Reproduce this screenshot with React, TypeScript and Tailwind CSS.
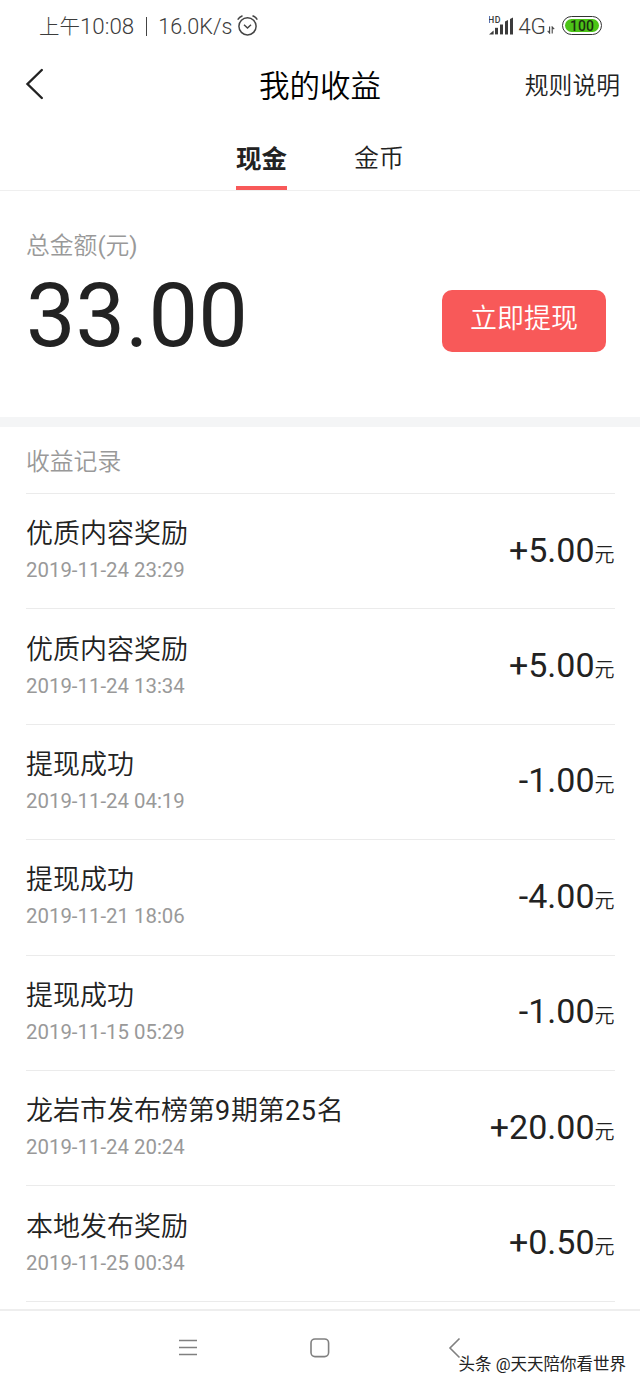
import React, { useState } from "react";

type EarningRecord = {
  title: string;
  time: string;
  amount: string;
};

const records: EarningRecord[] = [
  { title: "优质内容奖励", time: "2019-11-24 23:29", amount: "+5.00" },
  { title: "优质内容奖励", time: "2019-11-24 13:34", amount: "+5.00" },
  { title: "提现成功", time: "2019-11-24 04:19", amount: "-1.00" },
  { title: "提现成功", time: "2019-11-21 18:06", amount: "-4.00" },
  { title: "提现成功", time: "2019-11-15 05:29", amount: "-1.00" },
  { title: "龙岩市发布榜第9期第25名", time: "2019-11-24 20:24", amount: "+20.00" },
  { title: "本地发布奖励", time: "2019-11-25 00:34", amount: "+0.50" },
];

const AlarmIcon = () => (
  <svg className="ml-[5px] h-[22px] w-[22px]" viewBox="0 0 22 22" fill="none" stroke="#444" strokeWidth="1.5">
    <circle cx="10.5" cy="11.3" r="8.6" />
    <path d="M7 9.8L10.5 13L14 9.8" />
    <path d="M0.7 4.7Q2.3 1.9 5.5 0.8M20.3 4.7Q18.7 1.9 15.5 0.8" />
  </svg>
);

const SignalIcon = () => (
  <svg className="h-[20px] w-[26px]" viewBox="0 0 26 20" fill="#3c3c3c">
    <text x="-1" y="7.2" fontSize="8.8" fontWeight="500" letterSpacing="0.6" fontFamily="Roboto, sans-serif">
      HD
    </text>
    <path d="M0 18.4L4.6 14.5V18.4Z" />
    <rect x="6" y="11.8" width="3" height="6.6" />
    <rect x="11" y="8.5" width="3" height="9.9" />
    <path d="M16 5.4L19 4V18.4H16Z" />
    <path d="M21 3L24 1.5V18.4H21Z" />
  </svg>
);

const StatusBar = () => (
  <div className="flex h-[52px] items-center justify-between pl-[39px] pr-[38px] text-[#3c3c3c]">
    <div className="flex items-center whitespace-pre text-[22px] font-light">
      <span className="mt-[2px] text-[20.5px]">上午</span>
      <span className="mt-[2px] text-[22.3px]">10:08</span>
      <span className="ml-[12px] mr-[11px] h-[19px] w-px bg-[#444]" />
      <span className="mt-[2px] text-[21.6px]">16.0K/s</span>
      <AlarmIcon />
    </div>
    <div className="flex items-center">
      <SignalIcon />
      <span className="ml-[3px] mt-[2px] text-[22.5px] font-light">4G</span>
      <svg className="ml-[1px] mt-[7px] h-[8px] w-[8px]" viewBox="0 0 8 8" fill="none" stroke="#444" strokeWidth="1.1">
        <path d="M2.6 0.5V7L0.7 4.8M5.2 7.5V1L7.2 3.2" />
      </svg>
      <div className="-mt-px ml-[7px] flex h-[19px] w-[40px] rounded-full border-[1.5px] border-[#333] p-[2px]">
        <div className="flex flex-1 items-center justify-center rounded-full bg-[#4cc417] text-[14px] font-medium leading-none text-[#1c3012]">
          100
        </div>
      </div>
    </div>
  </div>
);

// digits sit a bit heavier and wider than the chinese text around them
const RecordTitle = ({ title }: { title: string }) => (
  <p className="text-[27px] font-[350] leading-[34px] text-[#222]">
    {title.split(/(\d+)/).map((part, i) =>
      /\d/.test(part) ? (
        <span key={i} className="font-normal tracking-[0.7px]">
          {part}
        </span>
      ) : (
        part
      )
    )}
  </p>
);

const RecordRow = ({ title, time, amount }: EarningRecord) => (
  <li className="flex h-[115.4px] items-center justify-between border-b border-[#ebebeb]">
    <div className="-mt-[3px] flex flex-col gap-[7px]">
      <RecordTitle title={title} />
      <p className="text-[20.4px] leading-[24px] text-[#999]">{time}</p>
    </div>
    <p className="mr-[0.5px] mt-[2px] flex items-baseline text-[34px] leading-[40px] text-[#222]">
      {amount}
      <span className="text-[20px] font-[350]">元</span>
    </p>
  </li>
);

const tabs = ["现金", "金币"];

const App = () => {
  const [active, setActive] = useState(0);
  return (
    <div className="flex h-[1387px] w-[640px] flex-col overflow-hidden bg-white font-[Roboto,'Noto_Sans_CJK_SC',sans-serif] font-[350]">
      <div className="font-normal">
        <StatusBar />
      </div>

      <header className="grid h-[66px] grid-cols-[1fr_auto_1fr] items-center pl-[25px] pr-[20px]">
        <svg className="-mt-[3px] h-[32px] w-[18px]" viewBox="0 0 18 32" fill="none" stroke="#222" strokeWidth="2.4" strokeLinecap="round">
          <path d="M16.8 2L2.5 16L16.8 30" />
        </svg>
        <h1 className="mr-[5px] mt-[4px] whitespace-nowrap text-center text-[30.5px] leading-[40px] text-black">
          我的收益
        </h1>
        <span className="mt-[3px] text-right text-[23.8px] text-[#222]">规则说明</span>
      </header>

      {/* tabs */}
      <nav className="flex h-[73px] shrink-0 justify-center gap-[67px] border-b border-[#efefef]">
        {tabs.map((tab, i) => (
          <button
            key={tab}
            onClick={() => setActive(i)}
            className={
              active === i
                ? "border-b-4 border-[#f85959] pt-[14px] text-[25.5px] font-bold text-[#222]"
                : "border-b-4 border-transparent pt-[14px] text-[25px] text-[#222]"
            }
          >
            {tab}
          </button>
        ))}
      </nav>

      <section className="flex h-[226px] justify-between pl-[26px] pr-[34px]">
        <div>
          <p className="mt-[39px] text-[23.8px] leading-[32px] text-[#999]">
            总金额<span className="font-normal">(</span>元<span className="font-normal">)</span>
          </p>
          <p className="text-[88.3px] font-normal leading-[108px] text-[#222]">33.00</p>
        </div>
        <button className="mt-[99px] h-[62px] w-[164px] rounded-[10px] bg-[#f85959] pb-[3px] text-[27px] text-white">
          立即提现
        </button>
      </section>

      <div className="h-[10px] shrink-0 bg-[#f4f5f6]" />

      <section className="pl-[26px] pr-[25px] font-normal">
        <h2 className="h-[67px] border-b border-[#ebebeb] text-[23.8px] font-[350] leading-[70px] text-[#999]">收益记录</h2>
        <ul>
          {records.map((record) => (
            <RecordRow key={record.time} {...record} />
          ))}
        </ul>
      </section>

      {/* system navigation */}
      <footer className="relative mt-auto h-[78px] shrink-0 border-t-2 border-[#eeeeee]">
        <svg className="h-[76px] w-full" viewBox="0 0 640 76" fill="none" stroke="#808080" strokeWidth="1.6">
          <path d="M179 29.5H197M179 36.5H197M179 43.5H197" />
          <rect x="311" y="28" width="17.6" height="17.6" rx="4" />
          <path d="M459.5 27.5L450 37L459.5 46.5" />
        </svg>
        <span className="absolute right-[14px] top-[42px] whitespace-nowrap text-[16.5px] font-normal leading-[24px] text-[#222] [text-shadow:-1px_-1px_0_#fff]">
          头条 @天天陪你看世界
        </span>
      </footer>
    </div>
  );
};

export default App;
